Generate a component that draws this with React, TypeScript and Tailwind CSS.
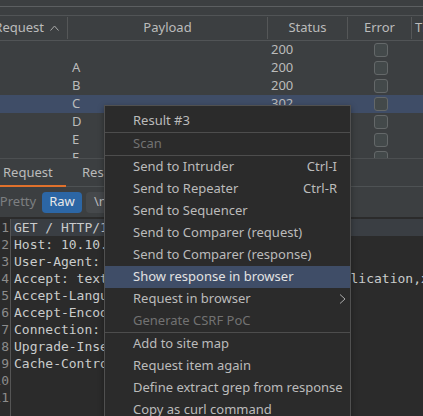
import React from 'react';

type Row = { payload: string; status: string; selected?: boolean };

const rows: Row[] = [
  { payload: '', status: '200' },
  { payload: 'A', status: '200' },
  { payload: 'B', status: '200' },
  { payload: 'C', status: '302', selected: true },
  { payload: 'D', status: '200' },
  { payload: 'E', status: '200' },
  { payload: 'F', status: '200' },
];

type MenuEntry =
  | { sep: true }
  | { label: string; shortcut?: string; disabled?: boolean; active?: boolean; submenu?: boolean };

const menu: MenuEntry[] = [
  { label: 'Result #3' },
  { sep: true },
  { label: 'Scan', disabled: true },
  { sep: true },
  { label: 'Send to Intruder', shortcut: 'Ctrl-I' },
  { label: 'Send to Repeater', shortcut: 'Ctrl-R' },
  { label: 'Send to Sequencer' },
  { label: 'Send to Comparer (request)' },
  { label: 'Send to Comparer (response)' },
  { label: 'Show response in browser', active: true },
  { label: 'Request in browser', submenu: true },
  { label: 'Generate CSRF PoC', disabled: true },
  { sep: true },
  { label: 'Add to site map' },
  { label: 'Request item again' },
  { label: 'Define extract grep from response' },
  { label: 'Copy as curl command' },
];

const code = [
  'GET / HTTP/1.1',
  'Host: 10.10.11.180',
  'User-Agent: Mozilla/5.0',
  'Accept: text/html,application/xhtml+xml,application,xml;q=0.9,*/*;q=0.8',
  'Accept-Language: en-US,en;q=0.5',
  'Accept-Encoding: gzip, deflate',
  'Connection: close',
  'Upgrade-Insecure-Requests: 1',
  'Cache-Control: max-age=0',
  '',
  '',
];

function Divider() {
  return <div className="w-px h-[22px] bg-[#555758] shrink-0" />;
}

export default function App() {
  return (
    <div className="relative w-[423px] h-[416px] overflow-hidden bg-[#3c3f41] text-[13px] text-[#bbbbbb] font-['Noto_Sans',sans-serif] flex flex-col">
      {/* top strip */}
      <div className="h-[6px] shrink-0" />
      <div className="h-px bg-[#5c5f61] shrink-0" />
      <div className="h-[8px] shrink-0" />
      <div className="h-px bg-[#515456] shrink-0" />

      {/* table header */}
      <div className="h-[24px] shrink-0 flex items-center whitespace-nowrap">
        <div className="w-[67px] shrink-0 flex justify-end items-center pr-[8px] overflow-hidden">
          <span>Request</span>
          <svg width="9" height="6" viewBox="0 0 9 6" className="ml-[6px] shrink-0">
            <path d="M0.5 5.5 L4.5 1 L8.5 5.5" fill="none" stroke="#aaaaaa" strokeWidth="1" />
          </svg>
        </div>
        <Divider />
        <div className="w-[199px] shrink-0 text-center">Payload</div>
        <Divider />
        <div className="w-[79px] shrink-0 text-center">Status</div>
        <Divider />
        <div className="w-[63px] shrink-0 text-center">Error</div>
        <Divider />
        <div className="pl-[3px]">Timeout</div>
      </div>
      <div className="h-px bg-[#515456] shrink-0" />

      {/* table body */}
      <div className="h-[117px] shrink-0 overflow-hidden">
        {rows.map((r, i) => (
          <div
            key={i}
            className={`h-[18px] flex items-center whitespace-nowrap ${r.selected ? 'bg-[#3f4d67]' : ''}`}
          >
            <div className="w-[68px] shrink-0" />
            <div className="w-[200px] shrink-0 pl-[4px]">{r.payload}</div>
            <div className="w-[80px] shrink-0 pl-[3px]">{r.status}</div>
            <div className="w-[64px] shrink-0 pl-[26px] flex items-center">
              <div className="w-[14px] h-[14px] rounded-[3px] border border-[#646869] bg-[#43494a]" />
            </div>
          </div>
        ))}
      </div>
      <div className="h-px bg-[#4c4f51] shrink-0" />

      {/* tabs */}
      <div className="h-[28px] shrink-0 flex border-b border-[#4e5254] whitespace-nowrap">
        <div className="relative w-[66px] flex items-center pl-[3px]">
          Request
          <div className="absolute left-0 right-0 bottom-[-1px] h-[2px] bg-[#e0712c]" />
        </div>
        <div className="flex items-center pl-[16px]">Response</div>
      </div>

      {/* toolbar */}
      <div className="h-[30px] shrink-0 flex items-center gap-[4px] whitespace-nowrap">
        <div className="-ml-[2px] w-[40px] h-[21px] flex items-center justify-center text-[#7d7f81]">Pretty</div>
        <div className="w-[40px] h-[21px] rounded-[4px] bg-[#2c66a5] text-[#e8e8e8] flex items-center justify-center">
          Raw
        </div>
        <div className="w-[34px] h-[21px] rounded-[4px] bg-[#46494c] flex items-center pl-[8px]">\n</div>
      </div>

      {/* editor */}
      <div className="flex-1 bg-[#2b2b2b] pt-[2px] flex font-['DejaVu_Sans_Mono',monospace] text-[13px] leading-[17px] text-[#c9cbcc]">
        <div className="w-[11px] shrink-0 border-r border-[#555555] overflow-hidden">
          {code.map((_, i) => (
            <div key={i} className="h-[17px] flex justify-end pr-px text-[#8c8c8c]">
              {i + 1}
            </div>
          ))}
        </div>
        <div className="flex-1 overflow-hidden">
          {code.map((line, i) => (
            <div
              key={i}
              className={`h-[17px] pl-[3px] whitespace-pre ${i === 0 ? 'bg-[#3a3e43]' : ''}`}
            >
              {line}
            </div>
          ))}
        </div>
      </div>

      {/* context menu */}
      <div className="absolute left-[104px] top-[105px] w-[247px] bg-[#2b2b2b] border border-[#505050] pt-[4px] pb-[4px] whitespace-nowrap shadow-[0_2px_6px_rgba(0,0,0,0.35)]">
        {menu.map((m, i) =>
          'sep' in m ? (
            <div key={i} className="h-px bg-[#4d4d4d]" />
          ) : (
            <div
              key={i}
              className={`h-[22px] flex items-center pl-[28px] pr-[13px] ${m.active ? 'bg-[#3f4d67] text-[#e2e2e2]' : ''} ${m.disabled ? 'text-[#727272]' : ''}`}
            >
              <span className="flex-1">{m.label}</span>
              {m.shortcut && <span>{m.shortcut}</span>}
              {m.submenu && (
                <svg width="7" height="10" viewBox="0 0 7 10" className="-mr-[9px]">
                  <path d="M1 0.5 L6 5 L1 9.5" fill="none" stroke="#aaaaaa" strokeWidth="1" />
                </svg>
              )}
            </div>
          )
        )}
      </div>
    </div>
  );
}
